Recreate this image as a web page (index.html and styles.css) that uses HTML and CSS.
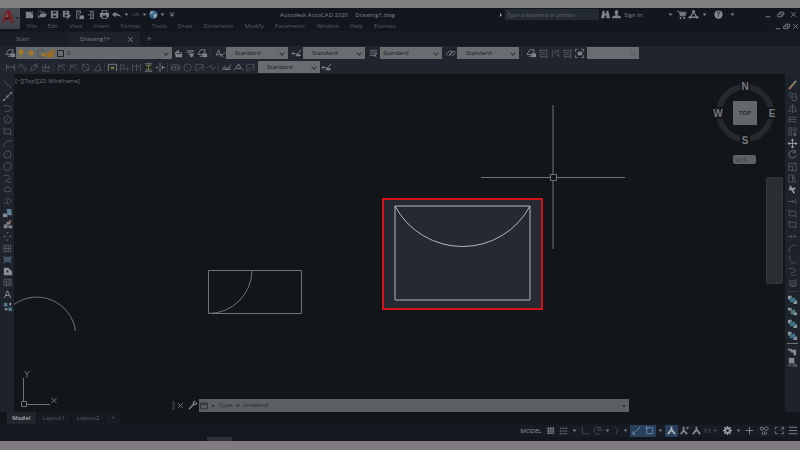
FILE: index.html
```html
<!DOCTYPE html>
<html lang="en">
<head>
<meta charset="utf-8">
<title>Autodesk AutoCAD 2020 - Drawing1.dwg</title>
<link rel="stylesheet" href="styles.css">
</head>
<body>
<svg class="sprite" aria-hidden="true">
  <symbol id="new" viewBox="0 0 12 12"><path class="f" d="M2 3h5l3 3v4H2zM7.500 2.500L10 5V3z"/></symbol>
  <symbol id="open" viewBox="0 0 12 12"><path class="f" d="M2 2h3l1 1h3v2H5L3 9h7l2-4H9.500M2 2v8h1z"/></symbol>
  <symbol id="save" viewBox="0 0 12 12"><path class="f" fill-rule="evenodd" d="M2 2h8v8H2zM4 3v2h4V3zM4 7v2h4V7z"/></symbol>
  <symbol id="saveas" viewBox="0 0 12 12"><path class="f" fill-rule="evenodd" d="M2 2h7v7H2zM4 3v1h3V3zM4 6v2h3V6z"/><path class="f" d="M6 10l4-4 1 1-4 4z"/></symbol>
  <symbol id="sheet" viewBox="0 0 12 12"><path class="s" d="M3 10V2h4v3M3 10h2M4.500 4h1.500M4.500 6H6"/><path class="f" d="M6 7h5v4H6z"/></symbol>
  <symbol id="door" viewBox="0 0 12 12"><path class="s" d="M4 2.500h4v8H4M5.500 3v7M2 6.500h3M6.500 6.500h1"/></symbol>
  <symbol id="print" viewBox="0 0 12 12"><path class="f" fill-rule="evenodd" d="M3 1h6v3h2v5H9v2H3V9H1V4h2zM4 2v2h4V2zM4 7v3h4V7z"/></symbol>
  <symbol id="undo" viewBox="0 0 12 12"><path class="f" d="M1 6l4-3v2c4 0 5 2 6 4C9 7 7 7 5 7v2z"/></symbol>
  <symbol id="redo" viewBox="0 0 12 12"><path class="f" d="M11 6L7 3v2C3 5 2 7 1 9c2-2 4-2 6-2v2z"/></symbol>
  <symbol id="caret" viewBox="0 0 12 12"><path class="f" d="M4 5h4L6 7.500z"/></symbol>
  <symbol id="more" viewBox="0 0 12 12"><path class="f" d="M4 4h5v1H4zM4 6h5L6.500 8.500z"/></symbol>
  <symbol id="globe" viewBox="0 0 12 12"><circle cx="6" cy="6" r="4.500" fill="#356588"/><path fill="#95a7b3" d="M3 2l3 1-1 2-3 1zM7 5l3 1-1 3-2 1-1-3z"/></symbol>
  <symbol id="layers" viewBox="0 0 12 12"><path class="s" d="M1 7l3-5h5L7 7zM3 9h5l2-4"/><path class="f" d="M6 6h5v4H6z"/></symbol>
  <symbol id="layer2" viewBox="0 0 12 12"><path class="f" d="M2 5l4-3 1 3h3v5H3z"/><path d="M4 6h5" stroke="#252b34"/></symbol>
  <symbol id="layer3" viewBox="0 0 12 12"><path class="s" d="M2 3h8M2 5l7-1M4 7h5"/><path class="f" d="M5 6h5L8 10H6z"/></symbol>
  <symbol id="bulb" viewBox="0 0 12 12"><path fill="#a77a20" d="M6 1.500a3 3 0 0 1 1.500 5.500v2h-3V7A3 3 0 0 1 6 1.500zM5 9.500h2V11H5z"/></symbol>
  <symbol id="sun" viewBox="0 0 12 12"><circle cx="6" cy="6" r="2.500" fill="#a97a1d"/><path d="M6 2v8M2 6h8M3.500 3.500l5 5M8.500 3.500l-5 5" stroke="#a97a1d"/></symbol>
  <symbol id="viewport" viewBox="0 0 12 12"><path fill="none" stroke="#4e5254" d="M2 2h7v8H2z"/><path fill="#a97a1d" d="M7 6h4v4H7z"/></symbol>
  <symbol id="unlock" viewBox="0 0 12 12"><path fill="#9c6f20" d="M1 5h8v6H1z"/><path fill="none" stroke="#9c6f20" stroke-width="1.500" d="M7 5V3q2-2 3 0v3"/></symbol>
  <symbol id="style" viewBox="0 0 12 12"><path class="s" d="M1 9l3-7 3 7M2 7h4M6 9l5-4M7 7l2 3"/></symbol>
  <symbol id="dimstyle" viewBox="0 0 12 12"><path class="s" d="M1 6h5M3 4L1 6l2 2M5 9l6-7M6 7l5 1"/><path class="f" d="M6 7h4v2H6z"/></symbol>
  <symbol id="tablestyle" viewBox="0 0 12 12"><path class="s" d="M2 3h8M2 5.500h8M2 8h4M6 9l4-3M7 7l2 3"/></symbol>
  <symbol id="clip" viewBox="0 0 12 12"><path class="s" d="M2 8q-1-2 1-3l3-2q2 0 1 2L4 8M5 9l3-5q3-1 3 1L8 9"/></symbol>
  <symbol id="group" viewBox="0 0 12 12"><path class="s" d="M2.500 2.500h7v7h-7zM4 5h4M4 7h4M1 2.500h2M9 2.500h2M2 10.500h1M9 10.500h2"/></symbol>
  <symbol id="groupx" viewBox="0 0 12 12"><path class="s" d="M2 2l4 4 4-4M2.500 4v6M5 3h5M9.500 5v5M7 7l3 3"/></symbol>
  <symbol id="groupbox" viewBox="0 0 12 12"><path class="s" d="M1.500 4V1.500H4M8 1.500h2.500V4M1.500 8v2.500H4M8 10.500h2.500V8"/><path class="f" d="M4 4h5v4H4z"/></symbol>
  <symbol id="lindim" viewBox="0 0 12 12"><path class="s" d="M1.500 2v8M10.500 2v8M2 5.500h8M4 4L2 5.500 4 7M8 4l2 1.500L8 7"/></symbol>
  <symbol id="aldim" viewBox="0 0 12 12"><path class="s" d="M1 5l3-3 6 5-2 3M3 3l5 5M1 5l2 1"/></symbol>
  <symbol id="arclen" viewBox="0 0 12 12"><path class="s" d="M2 10l1-5 6-3-2 5-5 3M6 3l4 2"/></symbol>
  <symbol id="ord" viewBox="0 0 12 12"><path class="s" d="M2 3v7h8M5 2v6M2 6h8M8 3v5"/></symbol>
  <symbol id="rad" viewBox="0 0 12 12"><path class="s" d="M2 10q0-7 8-7M3 3l7 6M3 3v3"/></symbol>
  <symbol id="dia" viewBox="0 0 12 12"><circle class="s" cx="6" cy="6" r="4"/><path class="s" d="M3 3l6 6"/></symbol>
  <symbol id="ang" viewBox="0 0 12 12"><path class="s" d="M8 2L2 9.500h8.500M7 3q3 2 2 6"/></symbol>
  <symbol id="quick" viewBox="0 0 12 12"><path class="s" d="M1.500 10V2.500h9V10"/><path fill="#71733a" d="M4 5h4v3H4z"/></symbol>
  <symbol id="base" viewBox="0 0 12 12"><path class="s" d="M1.500 2v8M5.500 2v5M9.500 5v5M2 3.500h3M2 7.500h8"/></symbol>
  <symbol id="cont" viewBox="0 0 12 12"><path class="s" d="M1.500 2v8M6 2v8M10.500 2v8M2 4.500h8"/></symbol>
  <symbol id="space" viewBox="0 0 12 12"><path class="s" d="M2 2h8M2 10h8"/><path fill="none" stroke="#757641" d="M3 4h6M3 8h6M6 3v6"/></symbol>
  <symbol id="break" viewBox="0 0 12 12"><path class="s" d="M5.500 1v4M5.500 7v4M1 6h3M7 6h4M8 4v4"/></symbol>
  <symbol id="tol" viewBox="0 0 12 12"><path class="s" d="M1.500 3v6M10.500 3v6M3 3h6v6H3zM6 4v4M4 6h4"/></symbol>
  <symbol id="circle" viewBox="0 0 12 12"><circle class="s" cx="6" cy="6" r="4"/><path class="s" d="M6 5.500v1"/></symbol>
  <symbol id="inspect" viewBox="0 0 12 12"><path class="s" d="M2 10V2.500h8V10M2 9.500h3M4 6l2 2 4-5"/></symbol>
  <symbol id="jog" viewBox="0 0 12 12"><path class="s" d="M1 6h2l2-3 2 6 2-3h2"/></symbol>
  <symbol id="editdim" viewBox="0 0 12 12"><path class="s" d="M1 9l3-4 2 3 5-5M3 8h7M9 6l1 2"/></symbol>
  <symbol id="textdim" viewBox="0 0 12 12"><path class="s" d="M1 9l2-2 3-5 3 5 2 2M4 7h4"/></symbol>
  <symbol id="line" viewBox="0 0 12 12"><path class="s" d="M2 2l8 8"/></symbol>
  <symbol id="cline" viewBox="0 0 12 12"><path class="s" d="M2 10l8-8"/><path class="f" d="M1 9h2v2H1zM5 5h2v2H5zM9 1h2v2H9z"/></symbol>
  <symbol id="poly" viewBox="0 0 12 12"><path class="s" d="M2 3h4q4 0 4 3t-3 3H3"/></symbol>
  <symbol id="hex" viewBox="0 0 12 12"><path class="s" d="M6 1.500l4 3-1.500 5h-5L2 4.500z"/><path class="s" d="M6 5v2"/></symbol>
  <symbol id="rect" viewBox="0 0 12 12"><path class="s" d="M2.500 3.500h7v5h-7zM1 2.500h2M9 9.500h2"/></symbol>
  <symbol id="arc" viewBox="0 0 12 12"><path class="s" d="M2 10q0-7 8-7M9 3h2"/></symbol>
  <symbol id="cloud" viewBox="0 0 12 12"><path class="s" d="M3 3q2-3 4-1 4 0 3 3 1 4-3 5-4 1-5-2 0-3 1-5z"/></symbol>
  <symbol id="spline" viewBox="0 0 12 12"><path class="s" d="M2 3q4-2 7 1Q8 8 4 8q1 3 6 2"/></symbol>
  <symbol id="ellipse" viewBox="0 0 12 12"><ellipse class="s" cx="6" cy="6" rx="4" ry="2.500"/></symbol>
  <symbol id="earc" viewBox="0 0 12 12"><path class="s" d="M3 4q3-3 6 0 2 4-3 5M2 8h4V5"/></symbol>
  <symbol id="insert" viewBox="0 0 12 12"><path class="f" d="M1 6h5v4H1z"/><path fill="#5d7f94" d="M5 1h5l1 7H6z"/></symbol>
  <symbol id="block" viewBox="0 0 12 12"><path class="f" d="M2 6h4v4H2zM7 7h4v3H7zM5 3h4v3H5z"/><path fill="#98643e" d="M8 1h2v3H8z"/></symbol>
  <symbol id="points" viewBox="0 0 12 12"><path class="f" d="M5 1h2v2H5zM2 5h2v2H2zM8 5h2v2H8zM5 9h2v2H5z"/></symbol>
  <symbol id="hatch" viewBox="0 0 12 12"><path class="s" d="M2 2v8M4.500 2v8M7 2v8M9.500 2v8M2 2.500h8M2 6h8M2 9.500h8"/></symbol>
  <symbol id="gradient" viewBox="0 0 12 12"><path fill="#435363" d="M2 3h8v6H2z"/><path class="s" d="M1 2l2 2M11 2L9 4M1 10l2-2M11 10L9 8"/></symbol>
  <symbol id="region" viewBox="0 0 12 12"><path fill="#8c9093" fill-rule="evenodd" d="M2 2h5l4 4v4H2zM5 5v2h2V5z"/></symbol>
  <symbol id="table" viewBox="0 0 12 12"><path class="s" d="M2 2.500h8v7H2zM2 5h8M2 7.500h8M5 2v7M8 2v7"/></symbol>
  <symbol id="text" viewBox="0 0 12 12"><path fill="none" stroke="#92979c" d="M2.500 10L6 2l3.500 8M4 7h4"/></symbol>
  <symbol id="addsel" viewBox="0 0 12 12"><path fill="#4c7685" d="M2 2h4v4H2zM7 7h4v4H7z"/><path fill="#8b9699" d="M8 2h2v3H8zM3 8h3v2H3z"/></symbol>
  <symbol id="erase" viewBox="0 0 12 12"><path stroke="#8c8667" stroke-width="2" d="M3 10l7-8"/><path stroke="#9b5d57" stroke-width="2" d="M2 11l2-2"/></symbol>
  <symbol id="copy" viewBox="0 0 12 12"><circle class="s" cx="4" cy="4" r="2"/><path class="s" d="M6 3h4v3M5.500 6.500h5v4h-5z"/></symbol>
  <symbol id="mirror" viewBox="0 0 12 12"><path class="s" d="M6 1v10M5 3L1.500 9.500H5M7 3l3.500 6.500H7"/></symbol>
  <symbol id="offset" viewBox="0 0 12 12"><path class="s" d="M2 3.500h8M2 6h8M2 8.500h8M2 3v6"/></symbol>
  <symbol id="array" viewBox="0 0 12 12"><path class="s" d="M2 2h3v3H2zM7 2h3v3H7zM2 7h3v3H2z"/><path class="f" d="M7 7h3v4H7z"/></symbol>
  <symbol id="move" viewBox="0 0 12 12"><path stroke="#999da0" d="M6 1v10M1 6h10"/><path fill="#999da0" d="M4 3l2-2.500L8 3zM4 9l2 2.500L8 9zM3 4L.5 6 3 8zM9 4l2.500 2L9 8z"/></symbol>
  <symbol id="rotate" viewBox="0 0 12 12"><path class="s" stroke-width="1.500" d="M9 3a4 4 0 1 0 1 4M9 1v3H6"/></symbol>
  <symbol id="scale" viewBox="0 0 12 12"><path class="s" d="M2 2.500h8v8H2zM2 6h4v4M6 6l3-3"/></symbol>
  <symbol id="stretch" viewBox="0 0 12 12"><path class="s" d="M2 2h4v8H2zM6 4l4 6H6M8 2v4"/></symbol>
  <symbol id="trim" viewBox="0 0 12 12"><path stroke="#8f9396" stroke-width="2" d="M3 2l5 8M9 4L5 7M2 6l5-1"/></symbol>
  <symbol id="extend" viewBox="0 0 12 12"><path class="s" d="M1 6h7M9.500 3v6"/><path class="f" d="M6 4l3 2-3 2z"/></symbol>
  <symbol id="dash" viewBox="0 0 12 12"><path class="s" d="M1 6h4M7 6h4M4.500 4v4M7.500 4v4"/></symbol>
  <symbol id="chamfer" viewBox="0 0 12 12"><path class="s" d="M2.500 10V6L6 2.500h4"/></symbol>
  <symbol id="fillet" viewBox="0 0 12 12"><path class="s" d="M3 2v4q0 4 7 4"/></symbol>
  <symbol id="explode" viewBox="0 0 12 12"><path class="s" d="M2 3h6l2-1v7H3V3M5 5h3v3H5z"/></symbol>
  <symbol id="order" viewBox="0 0 12 12"><path fill="#8b9798" d="M1 2h4v4H1zM7 7h4v4H7z"/><path fill="#3e7084" d="M3 4h6v5H3z"/></symbol>
  <symbol id="order2" viewBox="0 0 12 12"><path fill="#4b7869" d="M4 4h5v5H4z"/><path fill="#879195" d="M1 2h4v3H1zM7 7h4v3H7z"/></symbol>
  <symbol id="annot" viewBox="0 0 12 12"><path fill="#868a8f" d="M1 3h4v1h5v6H7V7H4V5H1z"/></symbol>
  <symbol id="hfront" viewBox="0 0 12 12"><path fill="#868a8f" d="M2 1h6v6H2z"/><path fill="#4a515b" d="M6 7h5v4H6zM1 8h4v2H1z"/></symbol>
  <symbol id="binoc" viewBox="0 0 12 12"><path class="f" d="M3 2h2v3h2V2h2l2 8H7V7H5v3H1z"/></symbol>
  <symbol id="user" viewBox="0 0 12 12"><path class="f" d="M6 1q2 0 2 3-1 2-1 3 4 0 4 3H1q0-3 4-3 0-1-1-3 0-3 2-3z"/></symbol>
  <symbol id="cart" viewBox="0 0 12 12"><path class="s" d="M1 2.500h2l2 5h5l1-4H4"/><path class="f" d="M4 9h2v2H4zM8 9h2v2H8zM4 4h6L9 7H5z"/></symbol>
  <symbol id="a360" viewBox="0 0 12 12"><path class="s" stroke-width="1.500" d="M6 3L2.500 9h7z"/><circle class="f" cx="6" cy="2.500" r="1.500"/><circle class="f" cx="2" cy="9" r="1.500"/><circle class="f" cx="10" cy="9" r="1.500"/></symbol>
  <symbol id="help" viewBox="0 0 12 12"><circle cx="6" cy="6" r="4.500" fill="#868b91"/><path d="M4.500 5q0-2 1.500-2t1.500 1.500L6 6v1.500M6 8v1" fill="none" stroke="#1a1e26"/></symbol>
  <symbol id="min" viewBox="0 0 12 12"><path class="f" d="M4 8h5v1H4z"/></symbol>
  <symbol id="restore" viewBox="0 0 12 12"><path class="s" d="M3 5.500h4.500v3H3zM5 5V3.500h4.500v3H8"/></symbol>
  <symbol id="close" viewBox="0 0 12 12"><path class="s" d="M3.500 3.500l5 5M8.500 3.500l-5 5"/></symbol>
  <symbol id="wrench" viewBox="0 0 12 12"><path class="s" stroke-width="1.500" d="M2 10l5-5M9 1L7 3v2h2l2-2"/></symbol>
  <symbol id="prompt" viewBox="0 0 12 12"><path fill="none" stroke="#26292b" d="M2 2.500h8v7H2zM2 4h8"/></symbol>
  <symbol id="grid" viewBox="0 0 12 12"><path class="s" d="M2 4h8M2 6.500h8M2 9h8M4 2v8M6.500 2v8M9 2v8"/></symbol>
  <symbol id="snap" viewBox="0 0 12 12"><path class="f" d="M2 3h2v1H2zM5 3h2v1H5zM8 3h2v1H8zM2 6h2v1H2zM5 6h2v1H5zM8 6h2v1H8zM2 9h2v1H2zM5 9h2v1H5zM8 9h2v1H8z"/></symbol>
  <symbol id="ortho" viewBox="0 0 12 12"><path class="s" d="M2.500 2v7.500H10"/></symbol>
  <symbol id="polar" viewBox="0 0 12 12"><path class="s" d="M10 5a4 4 0 1 0-1 4M6 6h5M6 6l4-4"/></symbol>
  <symbol id="iso" viewBox="0 0 12 12"><path class="s" d="M4 2l4 4M6 6v4"/></symbol>
  <symbol id="track" viewBox="0 0 12 12"><path class="s" d="M2 10l8-8M2 7v3h3"/></symbol>
  <symbol id="osnap" viewBox="0 0 12 12"><path class="s" d="M3 3h6.500v6.500H3zM1 3h4M3 1v4"/></symbol>
  <symbol id="person" viewBox="0 0 12 12"><path class="s" stroke-width="2" d="M6 2v4M6 5l-4 5M6 5l4 5"/></symbol>
  <symbol id="person2" viewBox="0 0 12 12"><path class="s" stroke-width="2" d="M5 2v4M5 6l-3 4M5 6l4 4"/><path class="s" d="M9 2v3M8 3h3"/></symbol>
  <symbol id="gear" viewBox="0 0 12 12"><circle cx="6" cy="6" r="2.500" fill="none" stroke="#999da3" stroke-width="2"/><path stroke="#999da3" stroke-width="1.500" d="M6 1v2M6 9v2M1 6h2M9 6h2M2.500 2.500l1.500 1.500M8 8l1.500 1.500M9.500 2.500L8 4M4 8L2.500 9.500"/></symbol>
  <symbol id="plus" viewBox="0 0 12 12"><path class="s" d="M6 2v8M2 6h8"/></symbol>
  <symbol id="isolate" viewBox="0 0 12 12"><circle class="s" cx="8" cy="4" r="2"/><path class="s" d="M1.500 2.500h3v3h-3zM3 9l2-2 2 3H3M8 7v3"/></symbol>
  <symbol id="clean" viewBox="0 0 12 12"><path class="s" d="M1.500 5V2.500H4M8 2.500h2.500V5M1.500 7v2.500H4M10.500 7v2.500H8M7 6l3-3"/></symbol>
  <symbol id="menu" viewBox="0 0 12 12"><path class="s" d="M2 2.500h9M2 6h9M2 9.500h9"/></symbol>
</svg>

<div class="app">
  <div class="edge"></div>
  <header class="header">
    <button class="logo" aria-label="Application menu">
      <svg viewBox="0 0 20 21"><path fill="#7c1f26" d="M2 15L7 2h3l4 13h-3l-1-4-5 1-1 3z"/><path fill="#4d181d" d="M6 9h3l1 2-5 1z"/><path fill="#6f7479" d="M7 5l-1 4h2z"/><path fill="#171a1e" d="M16 9h3l-1.500 2z"/></svg>
    </button>
    <div class="titlebar">
      <div class="quick">
        <button aria-label="New"><svg><use href="#new"/></svg></button>
        <button aria-label="Open"><svg><use href="#open"/></svg></button>
        <button aria-label="Save"><svg><use href="#save"/></svg></button>
        <button aria-label="Save as"><svg><use href="#saveas"/></svg></button>
        <button aria-label="Sheet set"><svg><use href="#sheet"/></svg></button>
        <button aria-label="Export"><svg><use href="#door"/></svg></button>
        <button aria-label="Plot"><svg><use href="#print"/></svg></button>
        <button aria-label="Undo"><svg><use href="#undo"/></svg></button>
      </div>
      <div class="quick narrow">
        <button aria-label="Undo list"><svg><use href="#caret"/></svg></button>
        <button class="dim" aria-label="Redo"><svg><use href="#redo"/></svg></button>
        <button aria-label="Redo list"><svg><use href="#caret"/></svg></button>
        <button aria-label="Share"><svg><use href="#globe"/></svg></button>
        <button aria-label="Share list"><svg><use href="#caret"/></svg></button>
        <button aria-label="Customize"><svg><use href="#more"/></svg></button>
      </div>
      <h1 class="title"><span>Autodesk AutoCAD 2020</span><span>Drawing1.dwg</span></h1>
      <svg class="play" viewBox="0 0 4 6"><path fill="#a0a3a8" d="M1 1l2 2-2 2z"/></svg>
      <input class="search" type="text" placeholder="Type a keyword or phrase" aria-label="Search">
      <div class="account">
        <button aria-label="Find"><svg><use href="#binoc"/></svg></button>
        <button class="signin"><svg><use href="#user"/></svg>Sign In</button>
      </div>
      <div class="services">
        <button aria-label="Sign in list"><svg><use href="#caret"/></svg></button>
        <button aria-label="Store"><svg><use href="#cart"/></svg></button>
        <button aria-label="Apps"><svg><use href="#a360"/></svg></button>
        <button aria-label="Apps list"><svg><use href="#caret"/></svg></button>
        <button class="helpbtn" aria-label="Help"><svg><use href="#help"/></svg></button>
        <button aria-label="Help list"><svg><use href="#caret"/></svg></button>
      </div>
      <div class="window">
        <button aria-label="Minimize"><svg><use href="#min"/></svg></button>
        <button aria-label="Restore"><svg><use href="#restore"/></svg></button>
        <button aria-label="Close"><svg><use href="#close"/></svg></button>
      </div>
    </div>
    <nav class="menubar">
      <a href="#">File</a><a href="#">Edit</a><a href="#">View</a><a href="#">Insert</a><a href="#">Format</a><a href="#">Tools</a><a href="#">Draw</a><a href="#">Dimension</a><a href="#">Modify</a><a href="#">Parametric</a><a href="#">Window</a><a href="#">Help</a><a href="#">Express</a>
      <div class="window small">
        <button aria-label="Minimize drawing"><svg><use href="#min"/></svg></button>
        <button aria-label="Restore drawing"><svg><use href="#restore"/></svg></button>
        <button aria-label="Close drawing"><svg><use href="#close"/></svg></button>
      </div>
    </nav>
  </header>

  <div class="tabs">
    <button class="tab">Start</button>
    <button class="tab active">Drawing1*<svg><use href="#close"/></svg></button>
    <button class="add" aria-label="New drawing">+</button>
  </div>

  <div class="toolbar">
    <button aria-label="Layer properties"><svg><use href="#layers"/></svg></button>
    <div class="combo layer">
      <svg><use href="#bulb"/></svg><svg><use href="#sun"/></svg><svg><use href="#viewport"/></svg><svg><use href="#unlock"/></svg><i class="swatch"></i>
      <select aria-label="Layer"><option>0</option></select>
    </div>
    <button aria-label="Make current"><svg><use href="#layer2"/></svg></button>
    <button aria-label="Previous layer"><svg><use href="#layer3"/></svg></button>
    <button aria-label="Layer states"><svg><use href="#layers"/></svg></button>
    <i class="sep"></i>
    <button aria-label="Text style"><svg><use href="#style"/></svg></button>
    <div class="combo"><select aria-label="Text style"><option>Standard</option></select></div>
    <button class="wide" aria-label="Dimension style"><svg><use href="#dimstyle"/></svg></button>
    <div class="combo"><select aria-label="Dimension style"><option>Standard</option></select></div>
    <button class="wide" aria-label="Table style"><svg><use href="#tablestyle"/></svg></button>
    <div class="combo tight"><select aria-label="Table style"><option>Standard</option></select></div>
    <button class="wide" aria-label="Multileader style"><svg><use href="#clip"/></svg></button>
    <div class="combo"><select aria-label="Multileader style"><option>Standard</option></select></div>
    <i class="sep"></i>
    <button aria-label="Group"><svg><use href="#layers"/></svg></button>
    <button class="dim" aria-label="Group edit"><svg><use href="#group"/></svg></button>
    <button class="dim" aria-label="Ungroup"><svg><use href="#groupx"/></svg></button>
    <button class="dim" aria-label="Group manager"><svg><use href="#group"/></svg></button>
    <button aria-label="Group selection"><svg><use href="#groupbox"/></svg></button>
    <div class="combo blank"><select aria-label="Group name"><option></option></select></div>
  </div>

  <div class="toolbar dims">
    <button aria-label="Linear"><svg><use href="#lindim"/></svg></button>
    <button aria-label="Aligned"><svg><use href="#aldim"/></svg></button>
    <button aria-label="Arc length"><svg><use href="#arclen"/></svg></button>
    <button aria-label="Ordinate"><svg><use href="#ord"/></svg></button>
    <i class="sep"></i>
    <button aria-label="Radius"><svg><use href="#rad"/></svg></button>
    <button aria-label="Jogged"><svg><use href="#rad"/></svg></button>
    <button aria-label="Diameter"><svg><use href="#dia"/></svg></button>
    <button aria-label="Angular"><svg><use href="#ang"/></svg></button>
    <i class="sep"></i>
    <button class="lit" aria-label="Quick dimension"><svg><use href="#quick"/></svg></button>
    <button aria-label="Baseline"><svg><use href="#base"/></svg></button>
    <button aria-label="Continue"><svg><use href="#cont"/></svg></button>
    <button class="lit" aria-label="Dimension space"><svg><use href="#space"/></svg></button>
    <button class="lit" aria-label="Dimension break"><svg><use href="#break"/></svg></button>
    <i class="sep"></i>
    <button aria-label="Tolerance"><svg><use href="#tol"/></svg></button>
    <button aria-label="Center mark"><svg><use href="#circle"/></svg></button>
    <button aria-label="Inspection"><svg><use href="#inspect"/></svg></button>
    <button aria-label="Jogged linear"><svg><use href="#jog"/></svg></button>
    <i class="sep"></i>
    <button class="lit" aria-label="Dimension edit"><svg><use href="#editdim"/></svg></button>
    <button class="lit" aria-label="Dimension text edit"><svg><use href="#textdim"/></svg></button>
    <button aria-label="Dimension update"><svg><use href="#inspect"/></svg></button>
    <div class="combo"><select aria-label="Dimension style control"><option>Standard</option></select></div>
    <button class="lit" aria-label="Dimension style manager"><svg><use href="#dimstyle"/></svg></button>
  </div>

  <main class="work">
    <div class="rail">
      <div class="stack draw">
        <button aria-label="Line"><svg><use href="#line"/></svg></button>
        <button class="lit" aria-label="Construction line"><svg><use href="#cline"/></svg></button>
        <button aria-label="Polyline"><svg><use href="#poly"/></svg></button>
        <button aria-label="Polygon"><svg><use href="#hex"/></svg></button>
        <button aria-label="Rectangle"><svg><use href="#rect"/></svg></button>
        <button aria-label="Arc"><svg><use href="#arc"/></svg></button>
        <button aria-label="Circle"><svg><use href="#circle"/></svg></button>
        <button aria-label="Revision cloud"><svg><use href="#cloud"/></svg></button>
        <button aria-label="Spline"><svg><use href="#spline"/></svg></button>
        <button aria-label="Ellipse"><svg><use href="#ellipse"/></svg></button>
        <button aria-label="Ellipse arc"><svg><use href="#earc"/></svg></button>
        <button class="lit" aria-label="Insert block"><svg><use href="#insert"/></svg></button>
        <button class="lit" aria-label="Make block"><svg><use href="#block"/></svg></button>
        <button aria-label="Point"><svg><use href="#points"/></svg></button>
        <button aria-label="Hatch"><svg><use href="#hatch"/></svg></button>
        <button aria-label="Gradient"><svg><use href="#gradient"/></svg></button>
        <button aria-label="Region"><svg><use href="#region"/></svg></button>
        <button aria-label="Table"><svg><use href="#table"/></svg></button>
        <button aria-label="Multiline text"><svg><use href="#text"/></svg></button>
        <button aria-label="Add selected"><svg><use href="#addsel"/></svg></button>
      </div>
    </div>

    <section class="canvas">
      <svg class="drawing" aria-label="Drawing">
        <g class="geo">
          <path d="M0 230.500A39 39 0 0 1 61.500 257"/>
          <path d="M194.500 196.500h93v43h-93zM238 196.500a43.500 43.500 0 0 1-43.500 43"/>
          <path d="M539 31v69M539 107v68M467 103.500h69M543 103.500h68M536.500 100.500h6v6h-6z"/>
          <path d="M9.500 304v23M12 330.500h24M7.500 327.500h5v5h-5zM10.500 297l2.500 3 2.500-3M13 300v3.500M37.500 324l5 5M42.500 324l-5 5"/>
        </g>
        <path class="frame" d="M369 125h159v110H369z"/>
        <path class="shape" d="M381 132h135v94H381zM381 132a76.500 76.500 0 0 0 135 0"/>
      </svg>
      <p class="viewlabel">[−][Top][2D Wireframe]</p>
      <svg class="cube" viewBox="0 0 66 90" aria-label="View cube">
        <circle cx="33" cy="36" r="26" fill="none" stroke="#25292d" stroke-width="6"/>
        <path fill="#12151a" d="M28 4h10v12H28zM28 58h10v12H28zM0 30h12v12H0zM54 30h12v12H54z"/>
        <path fill="#646769" d="M21 24h24v24H21z"/>
        <text class="face" x="33" y="38">TOP</text>
        <text x="33" y="13">N</text><text x="6" y="40">W</text><text x="60" y="40">E</text><text x="33" y="67">S</text>
        <rect x="21" y="78" width="23" height="9" rx="2" fill="#5e6264"/>
        <text class="wcs" x="29" y="85">WCS</text>
      </svg>
      <div class="navbar"><svg viewBox="0 0 16 107"><path d="M5 16h6v6H5zM5 35l6 6M5 55h5v4H5zM5 78l5 4" fill="none" stroke="#30363a"/></svg></div>
      <div class="command">
        <i class="grip"></i>
        <button aria-label="Close command line"><svg><use href="#close"/></svg></button>
        <button aria-label="Customize command line"><svg><use href="#wrench"/></svg></button>
        <div class="entry">
          <svg><use href="#prompt"/></svg><svg class="arrow"><use href="#caret"/></svg>
          <input type="text" placeholder="Type a command" aria-label="Command">
          <svg class="arrow up"><use href="#caret"/></svg>
        </div>
      </div>
    </section>

    <div class="rail right">
      <div class="stack modify">
        <button aria-label="Erase"><svg><use href="#erase"/></svg></button>
        <button aria-label="Copy"><svg><use href="#copy"/></svg></button>
        <button aria-label="Mirror"><svg><use href="#mirror"/></svg></button>
        <button aria-label="Offset"><svg><use href="#offset"/></svg></button>
        <button aria-label="Array"><svg><use href="#array"/></svg></button>
        <button aria-label="Move"><svg><use href="#move"/></svg></button>
        <button aria-label="Rotate"><svg><use href="#rotate"/></svg></button>
        <button aria-label="Scale"><svg><use href="#scale"/></svg></button>
        <button aria-label="Stretch"><svg><use href="#stretch"/></svg></button>
        <button aria-label="Trim"><svg><use href="#trim"/></svg></button>
        <button aria-label="Extend"><svg><use href="#extend"/></svg></button>
        <button aria-label="Break at point"><svg><use href="#rect"/></svg></button>
        <button aria-label="Break"><svg><use href="#rect"/></svg></button>
        <button aria-label="Join"><svg><use href="#dash"/></svg></button>
        <button aria-label="Chamfer"><svg><use href="#chamfer"/></svg></button>
        <button aria-label="Fillet"><svg><use href="#fillet"/></svg></button>
        <button aria-label="Blend"><svg><use href="#spline"/></svg></button>
        <button aria-label="Explode"><svg><use href="#explode"/></svg></button>
      </div>
      <i class="rule"></i>
      <div class="stack arrange">
        <button aria-label="Bring to front"><svg><use href="#order"/></svg></button>
        <button aria-label="Send to back"><svg><use href="#order2"/></svg></button>
        <button aria-label="Bring above"><svg><use href="#order"/></svg></button>
        <button aria-label="Send under"><svg><use href="#order"/></svg></button>
      </div>
      <i class="rule bright"></i>
      <div class="stack annotate">
        <button aria-label="Annotation to front"><svg><use href="#annot"/></svg></button>
        <button aria-label="Hatch to back"><svg><use href="#hfront"/></svg></button>
      </div>
    </div>
  </main>

  <nav class="layouts">
    <button class="current">Model</button><button>Layout1</button><button>Layout2</button><button aria-label="New layout">+</button>
  </nav>

  <footer class="status">
    <span class="peek"></span>
    <button class="model">MODEL</button>
    <button aria-label="Grid"><svg><use href="#grid"/></svg></button>
    <button aria-label="Snap"><svg><use href="#snap"/></svg></button>
    <button class="drop" aria-label="Snap options"><svg><use href="#caret"/></svg></button>
    <button class="slim dim" aria-label="Ortho"><svg><use href="#ortho"/></svg></button>
    <button class="slim dim" aria-label="Polar"><svg><use href="#polar"/></svg></button>
    <button class="drop" aria-label="Polar options"><svg><use href="#caret"/></svg></button>
    <button class="drop dim" aria-label="Isometric"><svg><use href="#iso"/></svg></button>
    <button class="drop" aria-label="Isometric options"><svg><use href="#caret"/></svg></button>
    <button class="on" aria-label="Tracking"><svg><use href="#track"/></svg></button>
    <button class="on" aria-label="Object snap"><svg><use href="#osnap"/></svg></button>
    <button class="drop" aria-label="Object snap options"><svg><use href="#caret"/></svg></button>
    <button class="on bright" aria-label="Annotation visibility"><svg><use href="#person"/></svg></button>
    <button class="slim lit" aria-label="Auto scale"><svg><use href="#person2"/></svg></button>
    <button class="slim lit" aria-label="Annotation scale"><svg><use href="#person"/></svg></button>
    <button class="ratio">1:1<svg><use href="#caret"/></svg></button>
    <button aria-label="Workspace"><svg><use href="#gear"/></svg></button>
    <button class="drop" aria-label="Workspace list"><svg><use href="#caret"/></svg></button>
    <button class="slim lit" aria-label="Monitor"><svg><use href="#plus"/></svg></button>
    <button class="spaced" aria-label="Isolate"><svg><use href="#isolate"/></svg></button>
    <button aria-label="Clean screen"><svg><use href="#clean"/></svg></button>
    <button class="lit" aria-label="Customization"><svg><use href="#menu"/></svg></button>
  </footer>
  <div class="edge bottom"></div>
</div>
</body>
</html>
```
FILE: styles.css
```css
* { box-sizing: border-box; }
body {
  margin: 0;
  background: #12151a;
  color: #6f747b;
  font: 6px/8px "Open Sans", "Noto Sans", sans-serif;
}
button, input, select {
  margin: 0;
  padding: 0;
  border: 0;
  background: none;
  color: inherit;
  font: inherit;
}
button {
  display: flex;
  align-items: center;
  justify-content: center;
}
button svg { width: 11px; height: 11px; flex: none; }
a { color: inherit; text-decoration: none; }
.sprite { position: absolute; width: 0; height: 0; }
.s { fill: none; stroke: currentColor; }
.f { fill: currentColor; }
.lit { color: #82878d; }
.dim { color: #414750; }

.app { display: flex; flex-direction: column; min-height: 100vh; }
.edge { height: 8px; background: #7f7f7f; }
.edge.bottom { height: 9px; background: #7f7b7f; }

.header {
  display: grid;
  grid-template-columns: 20px 1fr;
  grid-template-rows: 13px 10px;
  background: #12161e;
}
.logo {
  grid-row: 1 / 3;
  align-self: start;
  height: 21px;
  background: linear-gradient(#4c4f53, #3e4146);
}
.logo svg { width: 20px; height: 21px; }
.titlebar { display: flex; align-items: center; color: #7e8389; }
.quick { display: flex; width: 100px; margin-left: 3px; }
.quick button { flex: 1; min-width: 0; }
.quick.narrow { width: 54px; margin-left: -1px; }
.quick.narrow .dim { color: #2e343c; }
.title {
  display: flex;
  gap: 7px;
  margin: 0 0 0 104px;
  font-size: 6px;
  font-weight: 400;
  white-space: nowrap;
}
.play { width: 4px; height: 6px; margin-left: auto; }
.search {
  width: 94px;
  height: 11px;
  margin-left: 2px;
  padding: 0 2px;
  background: #242a34;
  font-style: italic;
}
.search::placeholder { color: #5c6168; opacity: 1; }
.account, .services, .window { display: flex; align-items: center; }
.account { width: 66px; }
.account button:first-child { width: 12px; }
.signin { gap: 2px; }
.services button { width: 10px; }
.services button:nth-child(n+2):nth-child(-n+3) { width: 12px; }
.services .helpbtn { width: 18px; }
.window { margin-left: 24px; }
.window button { width: 13px; }
.menubar { display: flex; align-items: center; gap: 11px; padding-left: 7px; color: #575c63; }
.window.small { margin-left: auto; }
.window.small button { width: 9px; color: #7e8389; }

.tabs { display: flex; height: 15px; padding-top: 1px; background: #151922; }
.tab {
  width: 68px;
  padding-left: 16px;
  justify-content: flex-start;
  background: #181d26;
}
.tab.active {
  width: 72px;
  padding: 0 4px 0 12px;
  background: #1c212a;
  color: #7e8389;
  justify-content: space-between;
}
.add { width: 18px; font-size: 9px; }

.toolbar {
  display: flex;
  align-items: center;
  height: 14px;
  padding-left: 4px;
  background: #1f242d;
  color: #7d8288;
}
.toolbar button { width: 12px; }
.toolbar .wide { width: 15px; padding-left: 2px; }
.toolbar .dim { color: #535960; }
.toolbar .sep { margin: 0 3px 0 2px; }
.toolbar.dims { color: #4a525d; }
.sep { width: 1px; height: 9px; background: #2f353f; }
.toolbar.dims .sep { margin: 0 1px; }
.combo {
  position: relative;
  display: flex;
  align-items: center;
  width: 62px;
  height: 12px;
  background: #6a6d6f;
  color: #191b1d;
}
.combo select {
  flex: 1;
  min-width: 0;
  height: 12px;
  padding-left: 9px;
  appearance: none;
}
.combo::after {
  content: "";
  position: absolute;
  right: 4px;
  top: 4px;
  width: 3px;
  height: 3px;
  border: solid #35383a;
  border-width: 0 1px 1px 0;
  transform: rotate(45deg);
}
.combo.layer { width: 156px; background: #676a6d; }
.combo.layer svg { width: 10px; height: 10px; }
.combo.layer select { padding-left: 3px; }
.swatch { width: 7px; height: 7px; margin-left: 1px; border: 1px solid #222426; }
.combo.tight select { padding-left: 3px; }
.combo.blank { width: 52px; margin-left: 2px; }
.combo.blank::after { border-color: #55585a; }
.dims .combo { margin-left: 2px; }

.work { display: flex; flex: 1; min-height: 338px; }
.rail { width: 14px; padding-top: 5px; background: #1d222b; color: #4d5560; }
.rail.right { width: 15px; }
.stack { display: flex; flex-direction: column; }
.stack button { flex: 1; min-height: 0; width: 100%; }
.draw { height: 233px; }
.modify { height: 210px; }
.rule { display: block; height: 1px; margin: 2px; background: #303640; }
.rule.bright { background: #6d7279; }
.arrange { height: 47px; }
.annotate { height: 22px; }

.canvas { position: relative; flex: 1; min-width: 0; overflow: hidden; background: #12151a; }
.drawing { position: absolute; width: 100%; height: 100%; }
.geo path { fill: none; stroke: #6f7376; }
.frame { fill: #252932; stroke: #d3151b; stroke-width: 2px; }
.shape { fill: none; stroke: #b3b5b9; }
.viewlabel { position: relative; margin: 3px 1px; }
.cube { position: absolute; top: 3px; right: 7px; width: 66px; height: 90px; }
.cube text { fill: #777b7e; font: bold 10px "Liberation Sans", sans-serif; text-anchor: middle; }
.cube .face { fill: #292c2f; font-size: 6px; }
.cube .wcs { fill: #3b3f42; font-size: 5px; font-weight: 400; }
.navbar {
  position: absolute;
  top: 103px;
  right: 2px;
  width: 17px;
  height: 107px;
  border: 1px solid #33383b;
  border-radius: 2px;
  background: #2a2e31;
}
.command {
  position: absolute;
  bottom: 0;
  left: 158px;
  right: 156px;
  display: flex;
  align-items: center;
  color: #7e8388;
}
.grip { width: 3px; height: 9px; background: #2a2f34; }
.command button { width: 11px; margin-right: 1px; }
.entry { display: flex; flex: 1; align-items: center; height: 13px; background: #5c6062; color: #222527; }
.entry svg { width: 10px; height: 10px; }
.entry .arrow { margin-left: -1px; }
.entry .up { transform: rotate(180deg); }
.entry input { flex: 1; min-width: 0; height: 13px; font: italic 6px "Liberation Mono", monospace; }
.entry input::placeholder { color: #282b2d; opacity: 1; }

.layouts { display: flex; height: 12px; padding-left: 7px; color: #555b62; }
.layouts button { padding: 0 5px; margin-right: 2px; background: #171b21; }
.layouts .current { background: #22262c; color: #979ba0; font-weight: 700; }

.status {
  display: flex;
  align-items: center;
  justify-content: flex-end;
  height: 17px;
  padding: 0 1px 4px 0;
  background: #121720;
  color: #767c84;
}
.status button { width: 13px; height: 12px; background: #171c24; }
.status .drop { width: 9px; }
.status .slim { width: 12px; }
.status .model { width: 24px; margin-right: 1px; color: #92979d; }
.status .on { background: #293f5a; color: #6589b0; }
.status .on.bright { color: #acb3bb; }
.status .ratio { width: 19px; font-size: 5px; }
.status .ratio svg { width: 8px; }
.status .spaced { width: 18px; }
.peek { align-self: flex-end; width: 25px; height: 4px; margin: 0 auto -4px 207px; background: #2b3134; }
```
